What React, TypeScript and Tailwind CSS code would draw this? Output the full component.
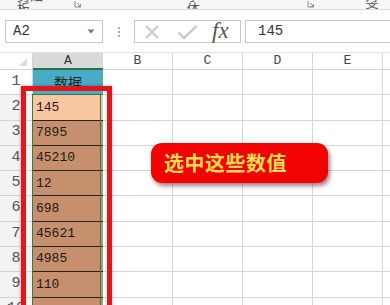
import React from 'react';

const rows = ['145', '7895', '45210', '12', '698', '45621', '4985', '110', ''];
const cols = ['B', 'C', 'D', 'E'];

const Launcher = () => (
  <svg width="8" height="8" viewBox="0 0 8 8" className="mt-[1px]">
    <path d="M1 1V7H7" stroke="#8a8a8a" strokeWidth="1" fill="none" />
    <path d="M3 3L6.5 6.5M6.5 4V6.5H4" stroke="#8a8a8a" strokeWidth="1" fill="none" />
  </svg>
);

export default function App() {
  return (
    <div className="relative w-[390px] h-[305px] overflow-hidden bg-white" style={{ fontFamily: '"Liberation Sans", "Noto Sans CJK SC", sans-serif' }}>
      {/* ribbon group labels (cut off) */}
      <div className="h-[10px] overflow-hidden bg-[#f6f6f6] border-b border-[#dcdcdc] flex items-end text-[13px] text-[#555]">
        <div className="flex items-end w-full relative">
          <span className="ml-[17px] -mb-[6px] leading-none">剪贴板</span>
          <span className="ml-[20px] mb-[1px]"><Launcher /></span>
          <span className="ml-[105px] -mb-[6px] leading-none">字体</span>
          <span className="ml-[96px] mb-[1px]"><Launcher /></span>
          <span className="ml-[50px] -mb-[6px] leading-none">对齐</span>
        </div>
      </div>

      {/* formula bar */}
      <div className="h-[43px] bg-white flex items-start pt-[10px] border-b border-[#e2e2e2]">
        <div className="ml-[5px] w-[98px] h-[23px] border border-[#c6c6c6] flex items-center justify-between px-[7px]">
          <span className="text-[14px] text-[#333]" style={{ fontFamily: '"Liberation Mono", monospace' }}>A2</span>
          <svg width="8" height="5" viewBox="0 0 8 5"><path d="M0.5 0.5H7.5L4 4.5Z" fill="#777" /></svg>
        </div>
        <div className="w-[31px] h-[23px] flex flex-col items-center justify-center gap-[2px]">
          <span className="w-[2px] h-[2px] bg-[#aaa]" />
          <span className="w-[2px] h-[2px] bg-[#aaa]" />
          <span className="w-[2px] h-[2px] bg-[#aaa]" />
        </div>
        <div className="w-[107px] h-[23px] border border-[#c6c6c6] flex items-center overflow-visible">
          <svg width="14" height="14" viewBox="0 0 14 14" className="ml-[10px]">
            <path d="M1 1L13 13M13 1L1 13" stroke="#c4c4c4" strokeWidth="1.8" />
          </svg>
          <svg width="21" height="16" viewBox="0 0 21 16" className="ml-[18px]">
            <path d="M1.5 8.5L7 14L19.5 2" stroke="#c8c8c8" strokeWidth="2.4" fill="none" />
          </svg>
          <span className="ml-[14px] text-[23px] italic text-[#555] leading-none -mt-[2px]" style={{ fontFamily: '"Liberation Serif", serif' }}>fx</span>
        </div>
        <div className="ml-[4px] flex-1 h-[23px] border-l border-t border-b border-[#c6c6c6] flex items-center pl-[12px]">
          <span className="text-[14px] text-[#333]" style={{ fontFamily: '"Liberation Mono", monospace' }}>145</span>
        </div>
      </div>

      {/* sheet */}
      <div className="grid grid-cols-[33px_70px_70px_70px_70px_70px_1fr] text-[#444]" style={{ fontFamily: '"Liberation Mono", monospace' }}>
        {/* column headers */}
        <div className="h-[17px] border-b border-r border-[#d4d4d4] bg-white flex items-end justify-end pr-[5px] pb-[3px]">
          <svg width="8" height="8" viewBox="0 0 8 8"><path d="M8 0V8H0Z" fill="#dcdcdc" /></svg>
        </div>
        <div className="h-[17px] bg-[#dadada] border-b-2 border-[#217346] flex items-center justify-center text-[13px] text-[#333]">A</div>
        {cols.map((c) => (
          <div key={c} className="h-[17px] border-r border-b border-[#d4d4d4] flex items-center justify-center text-[13px]">{c}</div>
        ))}
        <div className="h-[17px] border-b border-[#d4d4d4]" />

        {/* row 1 */}
        <div className="h-[25.3px] border-r border-b border-[#d4d4d4] flex items-end justify-center pb-[1px] text-[15px] text-[#555]">1</div>
        <div className="h-[25.3px] bg-[#4aabc6] border-b border-[#2d7c8f] flex items-center justify-center text-[14px] text-[#222]" style={{ fontFamily: '"Noto Sans CJK SC", sans-serif' }}>数据</div>
        {cols.map((c) => (
          <div key={c} className="h-[25.3px] border-r border-b border-[#d4d4d4]" />
        ))}
        <div className="h-[25.3px] border-b border-[#d4d4d4]" />

        {rows.map((v, i) => (
          <React.Fragment key={i}>
            <div className="h-[25.3px] bg-[#f3f3f3] border-r border-b border-[#d4d4d4] flex items-end justify-center pb-[1px] text-[15px] text-[#555]">{i + 2}</div>
            <div className={`h-[25.3px] border-b border-[#2b2119] flex items-center pl-[3px] text-[13px] text-[#1e1a16] ${i === 0 ? 'bg-[#f9c6a2]' : 'bg-[#c6906e]'}`}>{v}</div>
            {cols.map((c) => (
              <div key={c} className="h-[25.3px] border-r border-b border-[#d4d4d4]" />
            ))}
            <div className="h-[25.3px] border-b border-[#d4d4d4]" />
          </React.Fragment>
        ))}
      </div>

      {/* selection + annotation overlay */}
      <div className="absolute left-[21px] top-[86px] w-[91px] h-[240px] border-[5px] border-[#e3161b] shadow-[0_0_3px_rgba(0,0,0,0.35)]">
        <div className="absolute left-[6px] top-[3px] right-[6px] bottom-0 border border-[#2f7d4e]" />
      </div>

      <div className="absolute left-[151px] top-[143px] w-[177px] h-[40px] rounded-[11px] bg-[#f20303] shadow-[2px_3px_4px_rgba(80,0,0,0.5)] flex items-center pl-[13px]">
        <span className="text-[20px] font-bold text-[#ffdc4d] tracking-[0.5px]" style={{ fontFamily: '"Noto Sans CJK SC", sans-serif' }}>选中这些数值</span>
      </div>
    </div>
  );
}
